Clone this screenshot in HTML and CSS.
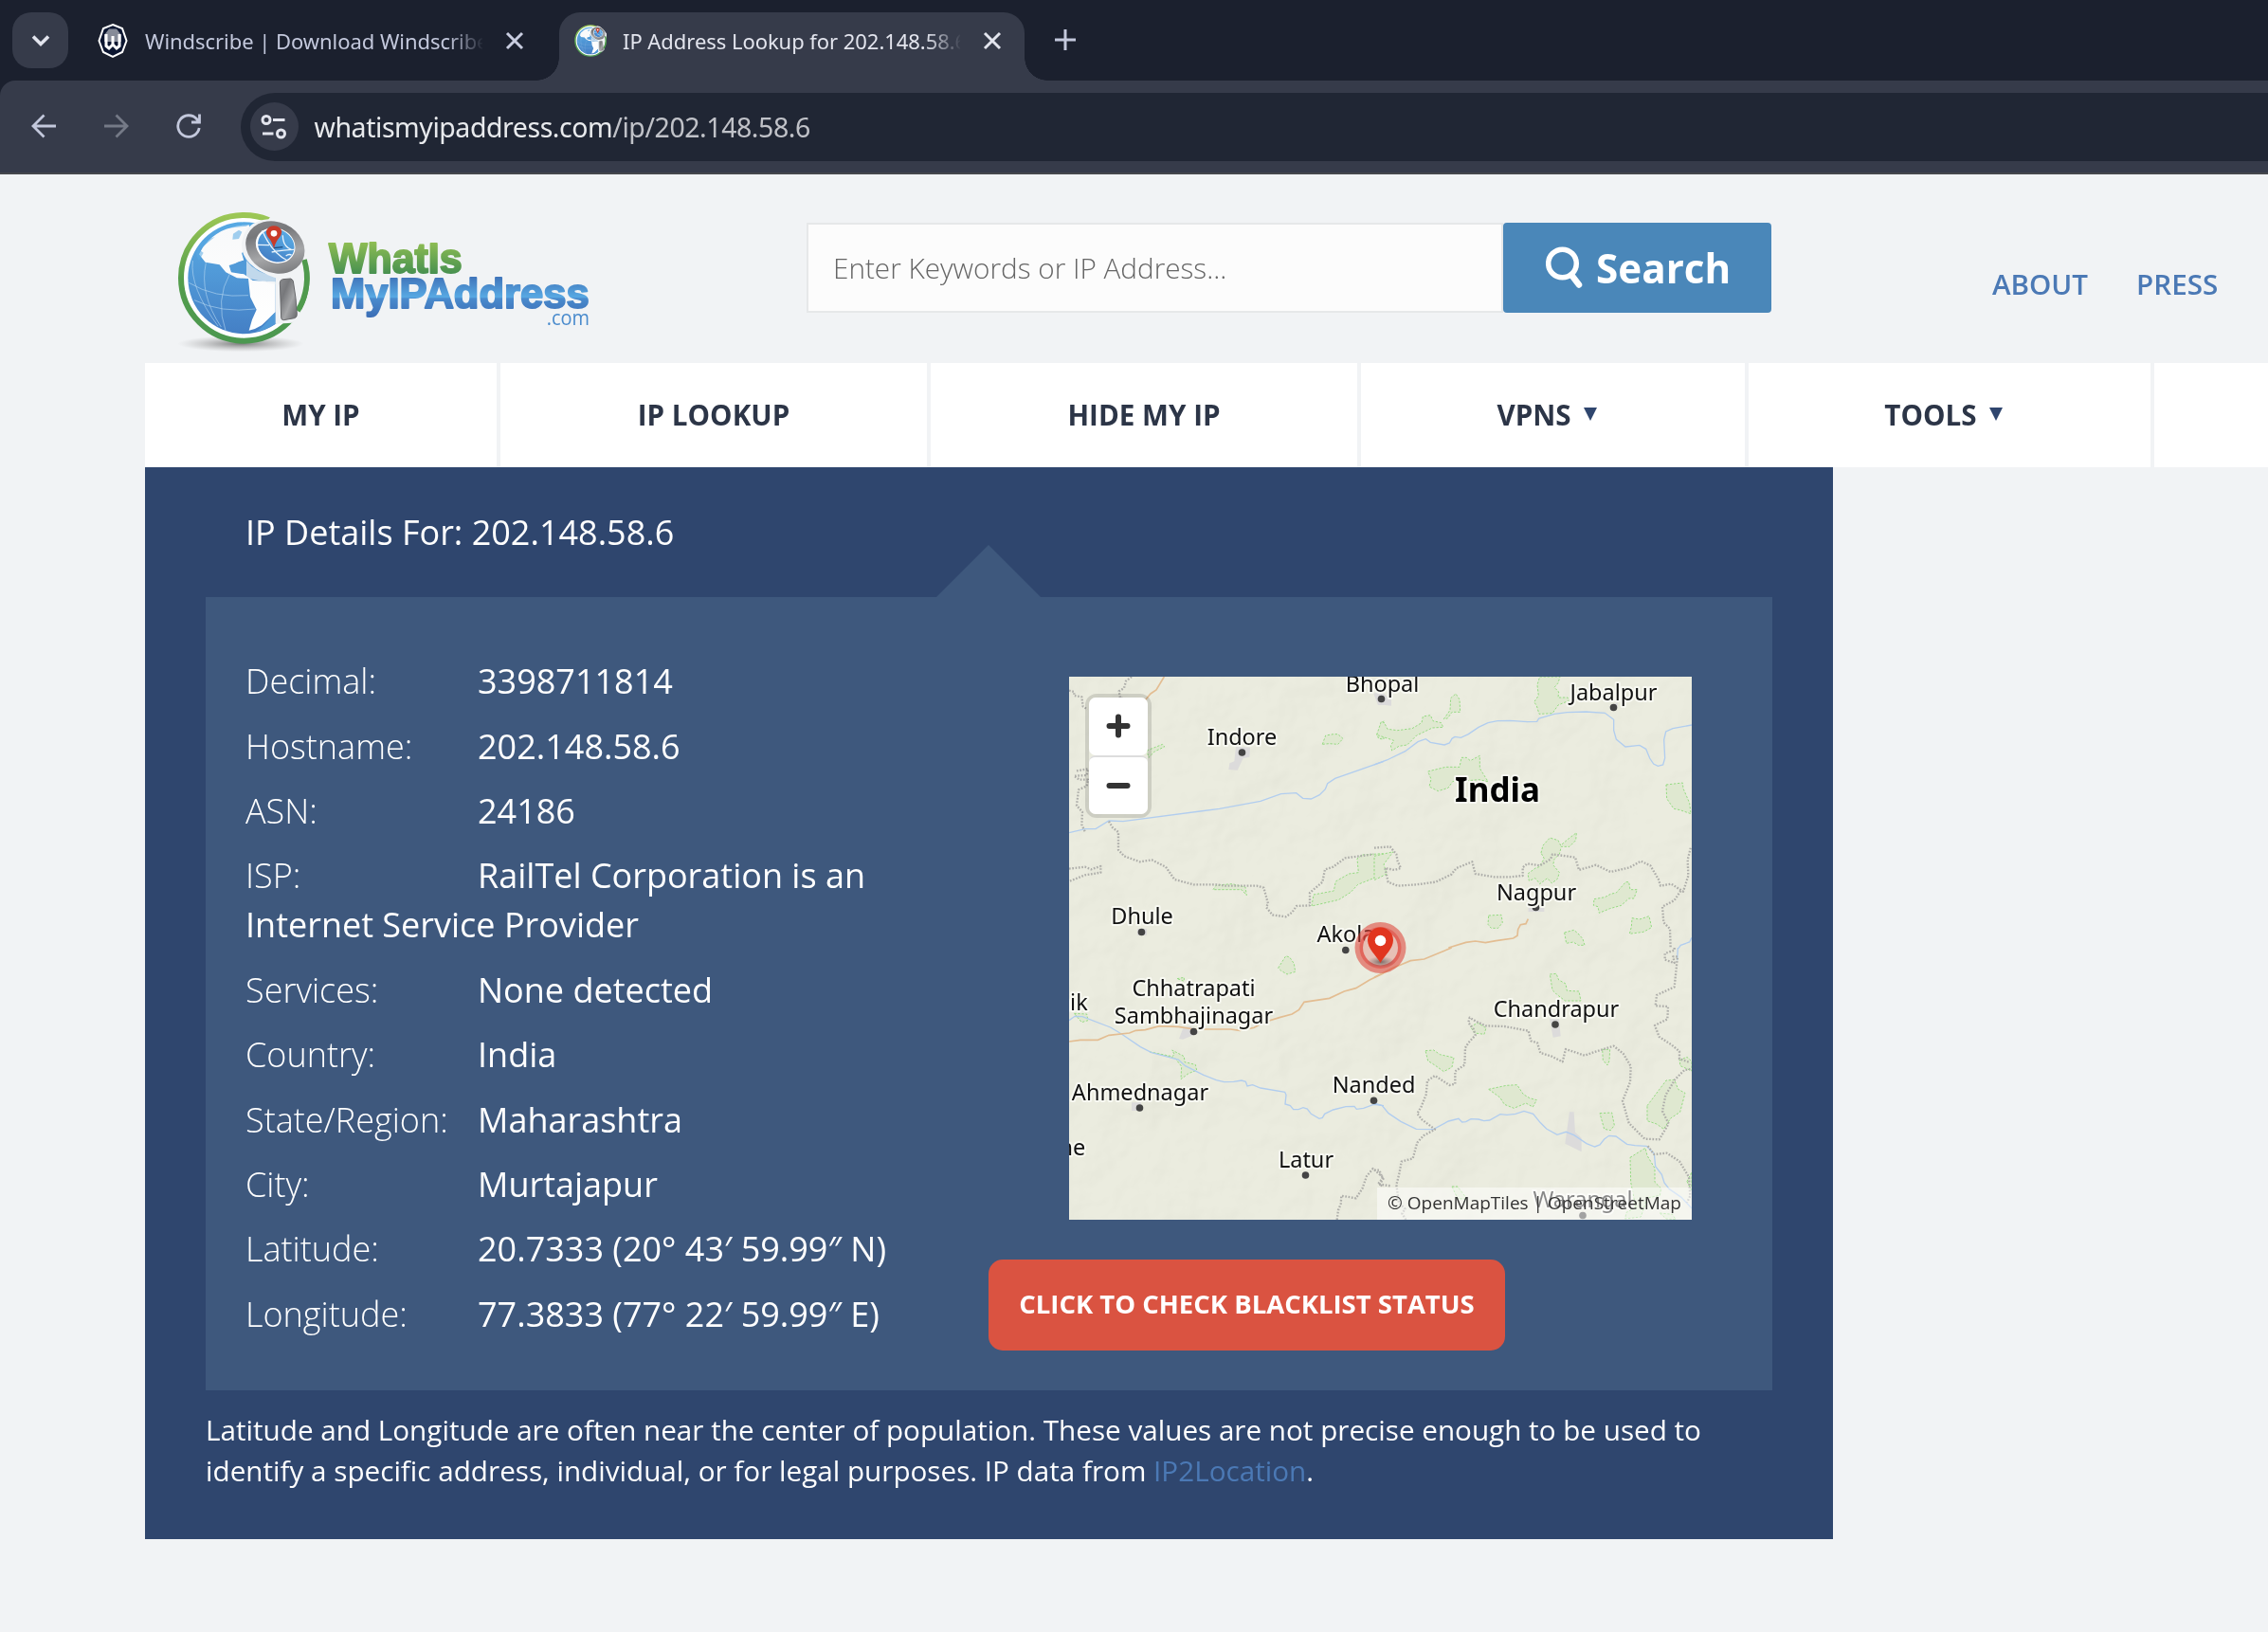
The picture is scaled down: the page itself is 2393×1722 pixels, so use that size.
FILE: index.html
```html
<!DOCTYPE html>
<html lang="en">
<head>
<meta charset="utf-8">
<title>IP Address Lookup for 202.148.58.6</title>
<link rel="stylesheet" href="styles.css">
</head>
<body>
<svg width="0" height="0" class="defs">
  <defs>
    <linearGradient id="ring" x1="0" y1="0" x2="0" y2="1"><stop offset="0" stop-color="#9cc755"/><stop offset=".5" stop-color="#559e4c"/><stop offset="1" stop-color="#4b9850"/></linearGradient>
    <linearGradient id="sea" x1="0" y1="0" x2="0" y2="1"><stop offset="0" stop-color="#58a9e3"/><stop offset=".45" stop-color="#519ad8"/><stop offset="1" stop-color="#447fc5"/></linearGradient>
    <linearGradient id="steel" x1="0" y1="0" x2="1" y2="1"><stop offset="0" stop-color="#8b8c8f"/><stop offset=".3" stop-color="#77787b"/><stop offset=".6" stop-color="#a5a6a8"/><stop offset="1" stop-color="#66676a"/></linearGradient>
    <linearGradient id="land" x1="0" y1="0" x2="0" y2="1"><stop offset="0" stop-color="#f8f9fa"/><stop offset="1" stop-color="#ffffff"/></linearGradient>
    <linearGradient id="green" gradientUnits="userSpaceOnUse" x1="0" y1="160" x2="0" y2="268"><stop offset="0" stop-color="#93c053"/><stop offset="1" stop-color="#469050"/></linearGradient>
    <linearGradient id="blue" gradientUnits="userSpaceOnUse" x1="0" y1="275" x2="0" y2="405"><stop offset="0" stop-color="#3f73b9"/><stop offset=".5" stop-color="#58a9e3"/><stop offset=".54" stop-color="#4a8bcd"/><stop offset="1" stop-color="#3b6db5"/></linearGradient>
    <radialGradient id="shade"><stop offset="0" stop-color="#555" stop-opacity=".75"/><stop offset="1" stop-color="#999" stop-opacity="0"/></radialGradient>
    <g id="globe">
      <circle cx="262" cy="280" r="200" fill="#fff"/>
      <circle cx="262" cy="280" r="199" fill="none" stroke="url(#ring)" stroke-width="18"/>
      <circle cx="262" cy="280" r="177" fill="url(#sea)"/>
      <path d="M120 205 Q140 160 190 132 Q230 112 278 112 L300 190 L255 200 L262 225 L215 240 L222 262 L262 268 L290 288 L362 292 L362 388 Q340 410 318 430 Q300 442 278 446 L288 412 L302 380 L282 340 L276 282 L240 280 L205 262 L185 238 L140 230 Z" fill="url(#land)"/>
      <path d="M128 165 Q100 200 120 225 L134 200 L120 190 L145 170 L170 150 M190 120 Q235 100 280 108 L270 116 L215 122 Z M228 140 l18 -12 10 6 -10 22 -20 2z" fill="#58a9e3" opacity=".55"/>
      <path d="M258 195 L300 215 L275 225 L282 235 L258 245 L275 262 L250 258 L244 250 L220 256 Q225 230 262 224 Z M300 268 L362 285 L335 292 Z M362 388 L362 425 Q330 445 300 450 Q330 430 345 405 Z" fill="#519ad8"/>
      <g fill="none" stroke="#b7d8f1" stroke-width="3" opacity=".6"><path d="M88 295 Q170 345 276 335 M105 350 Q190 392 298 378 M100 225 Q90 310 180 432 M142 232 Q120 330 190 435 M218 265 Q170 350 205 450"/></g>
      <path d="M348 84 L385 96 Q470 150 484 225 L470 225 L440 400 L414 422 L362 425 L362 280 Q250 240 255 170 Q265 100 340 94 Z" fill="#f1f3f5"/>
      <path d="M362 275 Q300 265 270 225 L270 280 L362 300Z" fill="#f1f3f5" opacity=".7"/>
      <path d="M453 222 A199 199 0 0 1 432 384" fill="none" stroke="#4f9a4d" stroke-width="17"/>
      <ellipse cx="361" cy="183" rx="96" ry="80" transform="rotate(25 361 183)" fill="url(#steel)"/>
      <ellipse cx="362" cy="177" rx="64" ry="55" transform="rotate(25 362 177)" fill="#fff"/>
      <ellipse cx="364" cy="177" rx="59" ry="51" transform="rotate(25 364 177)" fill="url(#sea)"/>
      <path d="M306 175 L342 176 M320 130 Q350 200 400 225 M350 198 Q390 190 422 190 M385 145 Q385 180 412 190 M395 210 q10 -8 18 -2" fill="none" stroke="#e8f3fb" stroke-width="4"/>
      <path d="M357 185 L385 182" stroke="#1d4c80" stroke-width="4"/>
      <path d="M357 187 Q352 165 338 150 Q330 138 334 128 Q342 115 357 115 Q374 115 381 129 Q384 141 374 152 Q362 165 357 187Z" fill="#c93a28"/>
      <circle cx="357" cy="139" r="10" fill="#fff"/>
      <path d="M385 284 L410 282 Q416 284 418 290 Q428 345 430 395 Q430 405 422 407 L388 413 Q380 413 380 405 L376 294 Q377 286 385 284Z" fill="url(#steel)" stroke="#66676a" stroke-width="3"/>
    </g>
  </defs>
</svg>

<div class="tabstrip">
  <div class="tab-menu"><svg width="24" height="24" viewBox="0 0 24 24"><path d="M4 7.500l8 8 8-8" fill="none" stroke="#e3e5ee" stroke-width="3.600"/></svg></div>
  <div class="tab">
    <svg class="favicon" width="32" height="38" viewBox="0 0 32 38"><path d="M16 2 L26 6 L30.500 19 L26 31 L16 36 L6 31 L1.500 19 L6 6Z" fill="#0b1530" stroke="#fff" stroke-width="2"/><path d="M7 20V13L12 6.500H20L25 13V20Z" fill="#868b98"/><path d="M9 12V24.500L12 27 16 23 20 27 23 24.500V12M16 14V23" fill="none" stroke="#fff" stroke-width="3"/></svg>
    <span class="tab-title">Windscribe | Download Windscribe</span>
    <svg class="close" width="20" height="20" viewBox="0 0 20 20"><path d="M2 2l16 16M18 2L2 18" stroke="#c9cde0" stroke-width="3"/></svg>
  </div>
  <div class="tab active">
    <svg class="favicon" width="34" height="34" viewBox="52 70 420 420"><use href="#globe"/></svg>
    <span class="tab-title">IP Address Lookup for 202.148.58.6</span>
    <svg class="close" width="20" height="20" viewBox="0 0 20 20"><path d="M2 2l16 16M18 2L2 18" stroke="#e3e5ee" stroke-width="3"/></svg>
  </div>
  <svg class="new-tab" width="22" height="22" viewBox="0 0 22 22"><path d="M11 0v22M0 11h22" stroke="#c3c8dc" stroke-width="3"/></svg>
</div>
<div class="toolbar-wrap">
<div class="toolbar">
  <svg width="26" height="26" viewBox="0 0 26 26"><path d="M26 13H2M13.500 1.500L2 13l11.500 11.500" fill="none" stroke="#c3c8dc" stroke-width="2.800"/></svg>
  <svg width="26" height="26" viewBox="0 0 26 26"><path d="M0 13H24M12.500 1.500L24 13L12.500 24.500" fill="none" stroke="#757a87" stroke-width="2.800"/></svg>
  <svg width="26" height="26" viewBox="0 0 26 26"><path d="M24.200 15A11.300 11.300 0 1 1 21.500 5.500L24 8.500M24.500 0.500V9H16" fill="none" stroke="#c3c8dc" stroke-width="2.800"/></svg>
  <div class="omnibox">
    <div class="site-info"><svg width="28" height="26" viewBox="0 0 28 26"><g fill="none" stroke="#e3e5ee" stroke-width="3"><circle cx="6" cy="5.500" r="4"/><circle cx="21.500" cy="20" r="4"/><path d="M13 5.500h12.500M2 20h11.500"/></g></svg></div>
    <span class="url">whatismyipaddress.com<span class="path">/ip/202.148.58.6</span></span>
  </div>
</div>
</div>

<header class="header">
  <svg class="logo" width="480" height="180" viewBox="0 0 1440 540">
    <ellipse cx="252" cy="488" rx="200" ry="26" fill="url(#shade)"/>
    <use href="#globe"/>
    <text class="logo-text" x="531" y="264" font-size="132" textLength="422" lengthAdjust="spacingAndGlyphs" fill="url(#green)" stroke="url(#green)">WhatIs</text>
    <text class="logo-text" x="537" y="375" font-size="132" textLength="818" lengthAdjust="spacingAndGlyphs" fill="url(#blue)" stroke="url(#blue)">MyIPAddress</text>
    <text class="logo-com" x="1220" y="428" font-size="66" textLength="136" lengthAdjust="spacingAndGlyphs" fill="#4a8bcd">.com</text>
  </svg>
  <form class="search">
    <div class="search-field"><span>Enter Keywords or IP Address...</span></div>
    <div class="search-btn"><svg width="39" height="45" viewBox="0 0 39 45"><circle cx="17.500" cy="18" r="14.800" fill="none" stroke="#fff" stroke-width="5.500"/><path d="M27 30L35 40.500" stroke="#fff" stroke-width="6.500" stroke-linecap="round"/></svg><span>Search</span></div>
  </form>
  <nav class="links"><a class="about">ABOUT</a><a class="press">PRESS</a></nav>
</header>

<nav class="menu">
  <a><span>MY IP</span></a><a><span>IP LOOKUP</span></a><a><span>HIDE MY IP</span></a><a><span>VPNS</span><i></i></a><a><span>TOOLS</span><i></i></a><a></a>
</nav>

<main class="panel">
  <h1>IP Details For: 202.148.58.6</h1>
  <section class="details">
    <div class="info">
      <p><span>Decimal:</span>3398711814</p>
      <p><span>Hostname:</span>202.148.58.6</p>
      <p><span>ASN:</span>24186</p>
      <p><span>ISP:</span>RailTel Corporation is an Internet Service Provider</p>
      <p><span>Services:</span>None detected</p>
      <p><span>Country:</span>India</p>
      <p><span>State/Region:</span>Maharashtra</p>
      <p><span>City:</span>Murtajapur</p>
      <p><span>Latitude:</span>20.7333 (20° 43′ 59.99″ N)</p>
      <p><span>Longitude:</span>77.3833 (77° 22′ 59.99″ E)</p>
    </div>
    <div class="side">
      <div class="map">
        <svg class="map-svg" width="657" height="573" viewBox="1128 714 657 573">
          <defs>
            <filter id="relief" x="0" y="0" width="1" height="1"><feTurbulence type="fractalNoise" baseFrequency=".013" numOctaves="4" seed="8"/><feDiffuseLighting surfaceScale="5" diffuseConstant="1.05" lighting-color="#fff"><feDistantLight azimuth="225" elevation="68"/></feDiffuseLighting></filter>
            <radialGradient id="pinshade"><stop offset="0" stop-color="#333" stop-opacity=".6"/><stop offset="1" stop-color="#555" stop-opacity="0"/></radialGradient>
          </defs>
          <rect x="1128" y="714" width="657" height="573" fill="#ebecdf"/>
          <rect class="relief" x="1128" y="714" width="657" height="573" filter="url(#relief)"/>
          <g transform="translate(1120 700) scale(.33333)">
            <path class="urban" d="M552 264l45 2-2 30-20 4-18 38-28-2 3-20 15-6zM240 840l30 0 0 20-30 0zM988 96l32-2v38l-18 0z"/>
            <path class="park" d="M826 256l10-28 25-4 14 0 16 14-16 18-28-2zM480 716l10-14 50-4 42 10 4 26-16-18-40 0zM270 276l50-20 6 8-30 14-20 20zM792 768l6-36 64-12 6-30 42-24 30-4-4-44 16-12 66-4v66l-80 32-22 24-38 24zM1020 182l-10 10 2 20-14 12 6 14 16 2z"/>
            <path class="river" d="M24 536L75 524 108 524 150 498 195 500 500 460 630 436 695 413 743 410 764 427 790 429 817 416 835 398 842 380 866 364 1020 310"/>
            <path class="road" d="M325 42L300 84 282 96 265 116"/>
            <path class="border" d="M24 86l16 4 0 12 24 4 4 30 14 10M222 42l-18 14-6 22-16 10 4 22 40 4M48 340l36-6-4 20-40 2 16 12 28 0-4 20-26 12-6 50 18 20-2 40 12 26M150 500l12 20 18 14 0 56 18 20 50 18 38-6 44 22 28 40 60 16 70 0 30 4 100 0 22 6 14 50-6 12 20 24 42 6 20-14 14-20 42-2 0-40 40-34 8-40 26-8 38-28 90-12M24 650l50-6 20 8 30-10 0 20-50 8-50 20"/>
          </g>
          <g transform="translate(1450 700) scale(.33333)">
            <path class="urban" d="M0 94l30 2 24 20 0 18-40-4zM740 138l30-14 0 14zM488 774h50v12h-50z"/>
            <path class="park" d="M524 42l64 0-6 20-12 14 14 14-2 18 30 0 4 10-34 14-18 26-42 2-8-26-8-12 14-20-4-34zM8 226l14-42 10 4 10 20 32 4 46-6 30-18 4-20 24-4 8 18 26 6 6 14-34 2-50 24-30 30-26 4-22 14-4-16 10-16zM220 176l20-28 2-38 16-14 12 18 2 40-26 0-14 20zM170 342l56-14 44 0 6-30 16 0 12 10 30-16 0 40 26 42-28-6-24 2-60 4-14 20-32 10-28-14 6-24zM924 384l52-6 2 18 20 46 4 34-34-12-20-4-22-32zM528 600l6-24 22-24 26 8 8 16 26-22 24-18-2 24-20 20-26 0-6 24-16 16-4 18 20 24-6 20-18 14-14-16-24 18-14-18-20 8-4-22 24-18 12-4 16-26zM0 610l60-14-30 40 10 30-40 20zM696 746l34-6 18-10 18-4 30-34 10 0 4 24 22 0-10 28-16 0-24 22-36 10-34 14-4-20-14-4zM362 798l40-2 4 24-14 18-22 0-10-12zM816 806l24 4 30-10 8 36-26 14-44 6 6-22zM602 852l30-8 12 10 16 18 6 20-20 0-16-10-22 4z"/>
            <path class="river" d="M0 321L40 306 98 278 138 248 163 239 178 250 222 258 238 252 246 238 255 232 274 235 298 224 330 202 360 188 390 182 430 181 485 185 515 184 521 174 570 160 610 155 670 153 730 157 758 178 758 212 766 240 795 264 840 259 860 271 872 300 884 318 898 325 914 321 920 300 917 242 923 216 945 206 1005 195M1005 868L998 882 970 892 963 902"/>
            <path class="road" d="M235 900L290 883 320 879 352 884 385 878 440 870 453 862 455 842 463 827 480 824 487 809"/>
            <path class="border" d="M0 584l50-4 20 24 4 22 10 22-20 6-30-6 10 44 30 12 60-4 60-8 50-24 16-20 50-20 10 38 60 10 50 0 40-4 0-26 14-12 40 6 34-20 6-16 72 10 12 40 54-16 46 22 60-14 36-20 30 14 26 44 6 20 34-6 38 24 16-50-2-50 10-40M970 720l-20 30-38 20 4 50 20 20 2 60"/>
          </g>
          <g transform="translate(1120 1000) scale(.33333)">
            <path class="urban" d="M386 252l24-4 24 22-50 20-12-2zM222 490h30v26h-30z"/>
            <path class="park" d="M686 64l24-38 12 4 14 20 4 26-26 8-20-12zM40 208l40 2 4 20-20 6zM366 98l22-4 0 12zM280 330l70 14 8-6-8-14 38 20 2 18 34 8 4 18-26 10-24 18 2-40-20-26z"/>
            <path class="river" d="M24 230L42 217 66 218 155 252 190 273 250 314 285 332 370 354 392 374 450 403 490 419 515 425 545 424 570 420 583 424 588 438 605 434 630 444 707 457 711 466 708 495 724 500 734 512 750 512 765 506 778 510 790 526 816 541 826 538 833 526 860 513 900 503 927 502 934 511 956 508 988 496 1020 500"/>
            <path class="road" d="M24 297L60 292 115 292 150 277 215 270 235 262 265 260 310 248 370 250 420 258 535 258 565 262 610 253 640 236 690 221 730 210 752 196 768 172 848 160 895 138 932 128 975 102 1020 80"/>
            <path class="border" d="M872 861l4-30 8-20 2-26 46 8 20-30 14-40 20-24 34 30-14 22 14 4"/>
          </g>
          <g transform="translate(1450 1000) scale(.33333)">
            <path class="urban" d="M555 226h30l5 54-24 4zM618 520h14l4 64 20 18 0 44-52-26z"/>
            <path class="park" d="M556 84l20-2 8 20 22 12 4 22 38 2 6 30-50 0-26-20-14-14zM304 250l24-12 26 16-6 20-30-4zM162 326l26-2 20 14 44 10-6 30-26 14-28-20-22-14zM722 322l24 0-2 36-6 14-14-16zM362 448l56-12 34-2 20 30 20 12 22 6-12 22-22-12-38 16-30-12-14-22zM714 524l38-2 8 40-12 16-20-4zM864 500l60-80 26-2 12 30 22 12-16 60-30 20-22 34-22-16-30-10zM810 664l48-30 6 24 24 40 0 44 20 20-4 22-40 8-20 60-50 6 4-20 30-16-16-80zM246 756l18 0 30 40-30-2zM966 356l24-10 15 14v30l-36-16zM990 740l15-30v60zM904 840l40 4 10 16-30-2z"/>
            <path class="river" d="M0 492L25 500 45 524 84 550 133 574 187 575 235 549 267 541 278 552 290 551 306 542 330 543 347 548 365 546 399 527 420 529 447 526 474 517 503 526 525 553 545 573 579 592 607 583 632 593 672 620 698 630 714 624 728 606 743 595 765 597 800 622 825 626 862 628 886 652 890 692 910 718 918 744 934 764 972 790 1005 825M961 0l-2 40"/>
            <path class="road" d="M0 94L60 64 115 41 158 36 245 0"/>
            <path class="border" d="M100 861l-12-20 10-14-20-20 -8-56 10-40 6-34 36-10 14-50 20-22 36-20-40-30-16-20 12-20 16-40 4-44 24-16 46 30 18-4 0-40 30-20 2-54 10-16 22-24-6-20-16-20 4-16 20 12 30 14 60 2 76 14 8 32 20 6 10 32 34 10 36 18 10-40 60 20 40-14 52-16 30 24 24 40-2 50-24 60 20 70 50 50 46 2 30-50-20-40 10-50 30-50 30-30 26-4 20 30 26-4M950 0l0 8-30 10 0 20 30 10-4-20 14 0-10 96-56 26-4 34 40 2-2 40-40 20 14 36 40 26 24 20 0 24 30 10M0 704l16 0 10 26-14 18 40 6M866 628l20 26 40-4 40 26 30 50 4 60-10 20"/>
          </g>
          <g class="dots"><circle cx="1457.500" cy="737.500" r="3.800"/><circle cx="1702.500" cy="746.500" r="3.800"/><circle cx="1310.500" cy="794" r="3.800"/><circle cx="1620.500" cy="957.500" r="3.800"/><circle cx="1204.500" cy="983.500" r="3.800"/><circle cx="1419.800" cy="1002.500" r="3.800"/><circle cx="1259.500" cy="1088.500" r="3.800"/><circle cx="1641" cy="1081" r="3.800"/><circle cx="1202.500" cy="1169" r="3.800"/><circle cx="1449.500" cy="1161.300" r="3.800"/><circle cx="1377.500" cy="1240" r="3.800"/><circle cx="1670" cy="1282.500" r="3.800"/></g>
          <g class="cities">
            <text x="1458.500" y="729.500">Bhopal</text><text x="1702.500" y="738.500">Jabalpur</text><text x="1310.500" y="785.500">Indore</text><text class="country" x="1580" y="845.500">India</text><text x="1621" y="949.500">Nagpur</text><text x="1205" y="975">Dhule</text><text x="1420" y="994">Akola</text><text x="1259.500" y="1050.500">Chhatrapati</text><text x="1259.500" y="1080">Sambhajinagar</text><text x="1642" y="1073">Chandrapur</text><text x="1203" y="1160.500">Ahmednagar</text><text x="1449.500" y="1153">Nanded</text><text x="1378" y="1231.500">Latur</text><text x="1670" y="1274">Warangal</text><text x="1110" y="1066">Nashik</text><text x="1117" y="1219">Pune</text>
          </g>
          <circle cx="1456.500" cy="1000" r="27" fill="#dc3c32" opacity=".55"/><circle cx="1456.500" cy="1000" r="22" fill="#e04038" opacity=".5"/><circle cx="1456.500" cy="1000" r="18.500" fill="#e8d0c6" opacity=".85"/>
          <ellipse cx="1457" cy="1015" rx="15" ry="6" fill="url(#pinshade)"/>
          <path d="M1456.500 1016C1452 1008 1443 1001 1443 992A13.500 13.500 0 0 1 1470 992C1470 1001 1461 1008 1456.500 1016Z" fill="#e1351f"/><circle cx="1456.500" cy="992.500" r="5.800" fill="#fff"/>
        </svg>
        <div class="zoomer"><b><svg width="26" height="26" viewBox="0 0 26 26"><path d="M3.500 13h19M13 3.500v19" stroke="#333" stroke-width="6" stroke-linecap="round"/></svg></b><b><svg width="26" height="26" viewBox="0 0 26 26"><path d="M3.500 13h19" stroke="#333" stroke-width="6" stroke-linecap="round"/></svg></b></div>
        <div class="credit">© OpenMapTiles | OpenStreetMap</div>
      </div>
      <a class="blacklist">CLICK TO CHECK BLACKLIST STATUS</a>
    </div>
  </section>
  <p class="note">Latitude and Longitude are often near the center of population. These values are not precise enough to be used to<br>identify a specific address, individual, or for legal purposes. IP data from <a>IP2Location</a>.</p>
</main>
</body>
</html>
```
FILE: styles.css
```css
* { box-sizing: border-box; }
body { margin: 0; width: 2393px; height: 1722px; overflow: hidden; background: #f1f3f5; font-family: "Open Sans", sans-serif; }
svg { display: block; flex: none; }
.defs { position: absolute; }

.tabstrip { height: 85px; background: #1b202e; display: flex; padding: 13px 0 0 13px; font-family: "Noto Sans", sans-serif; }
.tab-menu { width: 59px; height: 59px; border-radius: 20px; background: #363b4a; display: flex; align-items: center; justify-content: center; }
.tab { width: 491px; height: 72px; padding: 0 24px 13px 16px; display: flex; align-items: center; position: relative; }
.tab:not(.active) { width: 518px; padding: 0 37px 13px 31px; }
.tab-title { font-size: 22px; letter-spacing: -.05px; color: #c3c8dc; white-space: nowrap; overflow: hidden; width: 356px; margin-left: 18px; -webkit-mask-image: linear-gradient(90deg, #000 320px, transparent 358px); mask-image: linear-gradient(90deg, #000 320px, transparent 358px); }
.tab .close { margin-left: auto; }
.tab.active { background: #363b4a; border-radius: 22px 22px 0 0; }
.tab.active .tab-title { color: #e3e5ee; margin-left: 17px; }
.tab.active::before, .tab.active::after { content: ""; position: absolute; bottom: 0; width: 24px; height: 24px; }
.tab.active::before { left: -24px; background: radial-gradient(circle at 0 0, transparent 23.5px, #363b4a 24px); }
.tab.active::after { right: -24px; background: radial-gradient(circle at 100% 0, transparent 23.5px, #363b4a 24px); }
.new-tab { margin: 18px 0 0 32px; }
.toolbar-wrap { background: #1b202e; }
.toolbar { height: 99px; background: #363b4a; border-bottom: 2px solid #45474c; border-radius: 16px 0 0 0; padding-left: 33px; display: flex; align-items: center; gap: 50.5px; }
.toolbar > svg { margin-top: -1px; }
.omnibox { flex: 1; height: 72px; margin-left: -9px; background: #202634; border-radius: 36px 0 0 36px; display: flex; align-items: center; padding-left: 10px; }
.site-info { width: 51px; height: 51px; border-radius: 50%; background: #363b4a; display: flex; align-items: center; justify-content: center; }
.url { font: 28.5px "Noto Sans", sans-serif; letter-spacing: -.45px; color: #e8eaed; margin: 1px 0 0 17px; white-space: nowrap; }
.path { color: #c0c2c8; }

.header { height: 199px; display: flex; padding: 16px 0 0 170px; }
.logo-text { font-family: "Liberation Sans", sans-serif; font-weight: 700; stroke-width: 6; stroke-linejoin: round; }
.logo-com { font-family: "Open Sans", sans-serif; }
.search { display: flex; margin: 35px 0 0 201px; height: 95px; }
.search-field { width: 735px; height: 95px; border: 2px solid #e6e8e9; background: #fcfcfc; font-size: 29.7px; font-weight: 300; color: #666; display: flex; align-items: center; padding-left: 26px; }
.search-btn { width: 283px; background: #4a87b9; border-radius: 4px; color: #fff; font-size: 42.2px; font-weight: 700; display: flex; align-items: center; gap: 14px; padding-left: 45px; }
.links { display: flex; gap: 51px; margin: 78px 0 0 233px; font-size: 29.6px; line-height: 44px; font-weight: 600; color: #4b79b5; }

.menu { display: flex; gap: 4px; height: 110px; padding-left: 153px; font-size: 29.6px; font-weight: 700; color: #2c3547; }
.menu a { background: #fff; display: flex; align-items: center; justify-content: center; flex: none; width: 450px; gap: 13px; }
.menu span { margin-top: -2px; }
.menu a:nth-child(1) { width: 371px; }
.menu a:nth-child(4) { width: 405px; }
.menu a:nth-child(5) { width: 424px; }
.menu a:last-child { flex: 1; }
.menu i { margin: -2px 13px 0 0; border: 7px solid transparent; border-top: 14px solid #2f466e; border-bottom: 0; }

.panel { margin-left: 153px; width: 1781px; height: 1131px; background: #2f466e; color: #fff; padding: 0 64px; display: flow-root; }
h1 { margin: 43px 0 0 42px; font-size: 36px; font-weight: 400; line-height: 52px; height: 94px; }
.details { position: relative; height: 837px; background: #3e587d; display: flex; padding: 63.3px 0 0 42px; }
.details::before { content: ""; position: absolute; left: 771px; top: -55px; border: 55px solid transparent; border-top: 0; border-bottom-color: #3e587d; }
.info { width: 700px; font-size: 36px; line-height: 52px; }
.info p { margin: 0 0 16.400px; }
.info span { display: inline-block; width: 245px; font-weight: 300; }
.side { margin-left: 84px; padding-top: 20.7px; }
.map { position: relative; width: 657px; height: 573px; margin-left: 85px; overflow: hidden; }
.relief { opacity: .3; mix-blend-mode: multiply; }
.urban { fill: #dcdbdb; }
.park { fill: #dfe8d0; stroke: #96da83; stroke-width: 3; stroke-dasharray: 7 5; }
.river { fill: none; stroke: #b1cdef; stroke-width: 4; }
.road { fill: none; stroke: #e3bd92; stroke-width: 5; }
.border { fill: none; stroke: #aeaeaa; stroke-width: 7; stroke-dasharray: 5 5; stroke-linejoin: round; }
.dots { fill: #444; }
.cities { font-family: "Noto Sans", sans-serif; font-size: 23.500px; text-anchor: middle; fill: #111; stroke: #f8f9f2; stroke-width: 4; stroke-linejoin: round; paint-order: stroke; }
.country { font-size: 35px; font-weight: 700; fill: #000; }
.zoomer { position: absolute; left: 17px; top: 18px; border: 4px solid rgba(0, 0, 0, .12); border-radius: 12px; background-clip: padding-box; }
.zoomer b { width: 62px; height: 61px; background: #fff; border-radius: 7px; display: flex; align-items: center; justify-content: center; }
.zoomer b + b { border-top: 2px solid #ddd; height: 62px; }
.credit { position: absolute; right: 0; bottom: 0; height: 34px; line-height: 33px; padding: 0 11px; font-size: 19px; color: #333; background: rgba(255, 255, 255, .5); white-space: nowrap; }
.blacklist { display: flex; align-items: center; justify-content: center; width: 545px; height: 96px; padding-bottom: 2px; margin-top: 42px; border-radius: 15px; background: #da5341; font-size: 27.5px; font-weight: 700; white-space: nowrap; }
.note { margin: 20px 0 0; font-size: 29.66px; line-height: 43px; white-space: nowrap; }
.note a { color: #4b79b5; }
```
